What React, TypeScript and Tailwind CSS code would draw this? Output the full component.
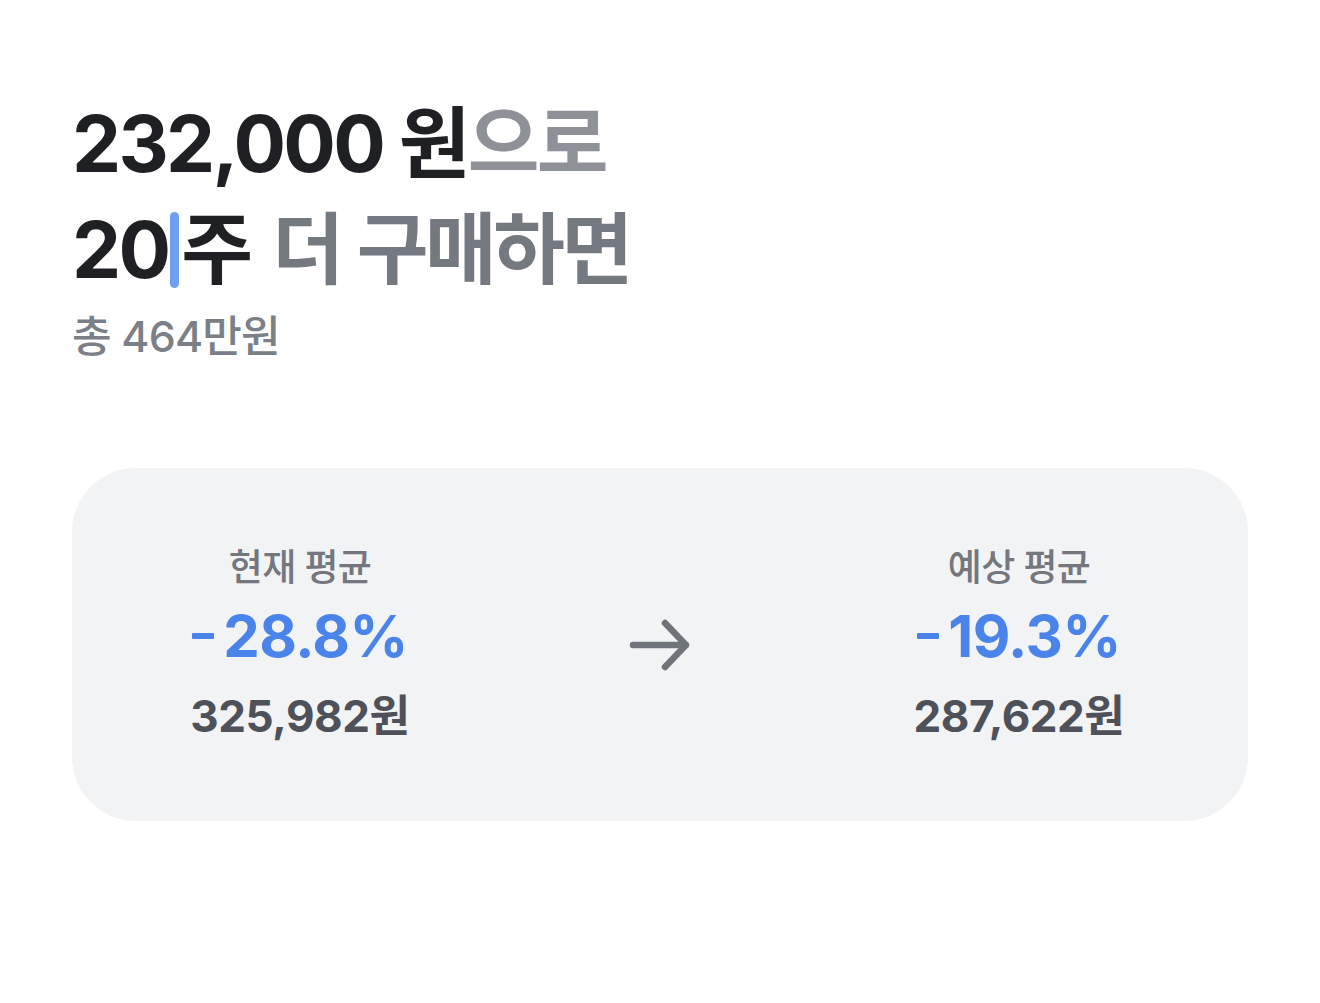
import React from 'react';

const FONT = 'font-["Inter","Noto_Sans_CJK_KR",sans-serif]';

type Avg = {
  label: string;
  rate: string;
  price: string;
};

const CURRENT: Avg = { label: '현재 평균', rate: '28.8%', price: '325,982원' };
const EXPECTED: Avg = { label: '예상 평균', rate: '19.3%', price: '287,622원' };

function AvgColumn({ item }: { item: Avg }) {
  return (
    <div className="w-[300px] flex flex-col items-center">
      <span className="text-[37px] leading-[44px] font-medium text-[#74777e] tracking-[-0.02em]">
        {item.label}
      </span>
      <span className="mt-[14px] flex items-center text-[58px] leading-[64px] font-bold text-[#4a84ea] tracking-[-0.01em]">
        <span className="mr-[9px] h-[6px] w-[22px] rounded-[1px] bg-[#4a84ea]" />
        {item.rate}
      </span>
      <span className="mt-[21px] text-[44px] leading-[54px] font-bold text-[#4e5159] tracking-[-0.01em]">
        {item.price}
      </span>
    </div>
  );
}

function ArrowRight() {
  return (
    <svg width="62" height="54" viewBox="0 0 62 54" fill="none">
      <path
        d="M4 27H57M36 5L57 27L36 49"
        stroke="#6f737a"
        strokeWidth="6.5"
        strokeLinecap="round"
        strokeLinejoin="round"
      />
    </svg>
  );
}

export default function App() {
  return (
    <div className={`min-h-[1003px] w-[1320px] bg-white ${FONT}`}>
      <div className="px-[72px] pt-[91px]">
        <h1 className="text-[78px] leading-[106px] font-bold tracking-[-0.035em] text-[#1f2024]">
          <div>
            232,000 원<span className="font-semibold text-[#8e9198]">으로</span>
          </div>
          <div className="flex items-center">
            <span>20</span>
            <span className="mx-[2px] h-[76px] w-[9px] rounded-full bg-[#6f9ff0]" />
            <span>주</span>
            <span className="ml-[22px] font-semibold tracking-[-0.045em] text-[#74787f]">더 구매하면</span>
          </div>
        </h1>
        <p className="mt-[5px] text-[43px] leading-[56px] font-medium text-[#7b7f87] tracking-[-0.02em]">
          총 464만원
        </p>
      </div>

      <div className="mx-[72px] mt-[104px] h-[353px] rounded-[64px] bg-[#f2f3f5] flex items-center justify-between pl-[78px] pr-[79px]">
        <AvgColumn item={CURRENT} />
        <ArrowRight />
        <AvgColumn item={EXPECTED} />
      </div>
    </div>
  );
}
